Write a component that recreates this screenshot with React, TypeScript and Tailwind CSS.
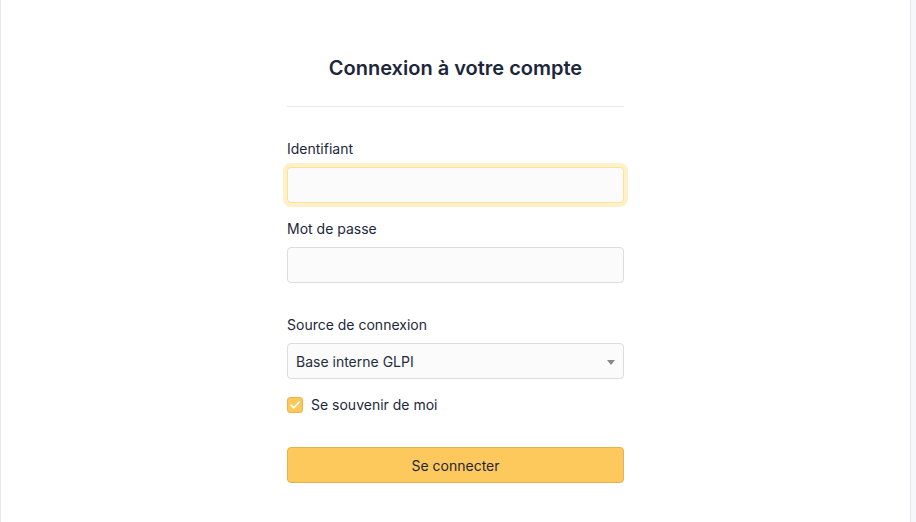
import React from "react";

export default function App() {
  return (
    <div
      className="flex min-h-[522px] w-full bg-[#f5f7fb] text-[#1d273b]"
      style={{ fontFamily: "Inter, 'Noto Sans', sans-serif" }}
    >
      <div className="w-[911px] min-h-[522px] border-x border-[#e6e7e9] bg-white">
        <div className="mx-auto w-[337px] pt-[54px]">
          <h2 className="text-center text-[20px] font-semibold leading-[28px] text-[#1d273b]">
            Connexion à votre compte
          </h2>
          <div className="mt-[24px] h-px bg-[#e6e7e9]" />
          <div className="mt-[32px]">
            <label className="block text-[14px] leading-[20px] text-[#1d273b]">Identifiant</label>
            <input
              type="text"
              className="mt-[8px] block h-[36px] w-full rounded-[4px] border border-[#fde391] bg-[#fbfbfb] px-3 text-[14px] outline-none ring-4 ring-[#fef0c9]"
            />
          </div>
          <div className="mt-[16px]">
            <label className="block text-[14px] leading-[20px] text-[#1d273b]">Mot de passe</label>
            <input
              type="password"
              className="mt-[8px] block h-[36px] w-full rounded-[4px] border border-[#dadcde] bg-[#fbfbfb] px-3 text-[14px] outline-none"
            />
          </div>
          <div className="mt-[32px]">
            <label className="block text-[14px] leading-[20px] text-[#1d273b]">Source de connexion</label>
            <div className="relative mt-[8px] flex h-[36px] w-full items-center rounded-[4px] border border-[#dadcde] bg-[#fbfbfb] pl-[8px] text-[14px] text-[#232e3c]">
              Base interne GLPI
              <svg
                className="absolute right-[8px] top-[16px]"
                width="8"
                height="5"
                viewBox="0 0 8 5"
              >
                <path d="M0 0 H8 L4 5 Z" fill="#888" />
              </svg>
            </div>
          </div>
          <div className="mt-[16px] flex h-[20px] items-center">
            <span className="flex h-[16px] w-[16px] items-center justify-center rounded-[3px] border border-[#eab54f] bg-[#fcc85c]">
              <svg width="10" height="8" viewBox="0 0 10 8">
                <path
                  d="M1 4.2 L3.8 6.8 L9 1.2"
                  fill="none"
                  stroke="#fff"
                  strokeWidth="1.6"
                  strokeLinecap="round"
                  strokeLinejoin="round"
                />
              </svg>
            </span>
            <span className="ml-[8px] text-[14px] leading-[20px] text-[#1d273b]">Se souvenir de moi</span>
          </div>
          <button className="mt-[32px] flex h-[36px] w-full items-center justify-center rounded-[4px] border border-[#e3b24f] bg-[#fdc95c] text-[14px] text-[#1d273b]">
            Se connecter
          </button>
        </div>
      </div>
    </div>
  );
}
